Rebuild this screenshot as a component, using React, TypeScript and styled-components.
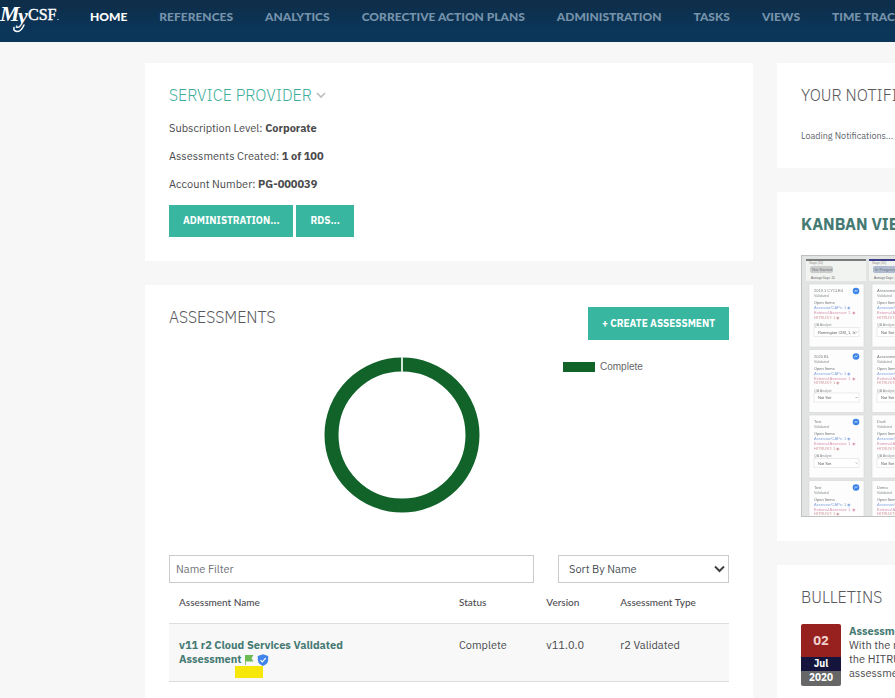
import React from "react";
import styled, { createGlobalStyle } from "styled-components";

const sans = `"IBM Plex Sans", "Noto Sans", sans-serif`;
const lato = `Lato, "Open Sans", sans-serif`;
const teal = "#38b6a0";
const link = "#457a73";

const GlobalStyle = createGlobalStyle`
  *, *::before, *::after { box-sizing: border-box; }
  body {
    margin: 0;
    background: #f7f7f7;
    color: #4a4a4c;
    font: 11px/14px ${sans};
  }
  h2, p { margin: 0; }
`;

const Page = styled.div`
  min-height: 100vh;
  overflow-x: clip;
`;

const TopBar = styled.header`
  display: flex;
  align-items: flex-start;
  height: 42px;
  background: linear-gradient(#0e2d48, #0b3559 70%);
  white-space: nowrap;
  overflow: hidden;
`;

const Logo = styled.a`
  flex: none;
  width: 90px;
  height: 42px;
`;

const Nav = styled.nav`
  display: flex;
  gap: 32px;
`;

const NavLink = styled.a<{ $active?: boolean }>`
  flex: none;
  color: ${(p) => (p.$active ? "#ffffff" : "#7593ab")};
  font: 900 12px/34px ${lato};
  text-decoration: none;
`;

const Layout = styled.main`
  display: grid;
  grid-template-columns: minmax(0, 1fr) 292px;
  gap: 24px;
  width: calc(100% + 174px);
  padding: 21px 0 0 145px;
`;

const Column = styled.div`
  display: flex;
  flex-direction: column;
  gap: 24px;
`;

const Card = styled.section`
  padding: 20px 24px 24px;
  background: #ffffff;
`;

const CardHeader = styled.div`
  display: flex;
  justify-content: space-between;
  align-items: flex-start;
`;

const Title = styled.h2<{ $tone?: "teal" | "strong" }>`
  color: ${(p) => (p.$tone === "teal" ? "#3fae9c" : p.$tone === "strong" ? link : "#58585c")};
  font-size: 16px;
  font-weight: ${(p) => (p.$tone === "strong" ? 700 : 300)};
  line-height: 24px;
  white-space: nowrap;
`;

const Details = styled.div`
  margin: 7px 0;
  line-height: 28px;
`;

const Buttons = styled.div`
  display: flex;
  gap: 3px;
`;

const Button = styled.button`
  height: 32px;
  padding: 0 14px;
  border: 0;
  background: ${teal};
  color: #ffffff;
  font: 700 10px/14px ${sans};
  white-space: nowrap;
`;

const CreateButton = styled(Button)`
  height: 33px;
  margin-top: 2px;
`;

const ChartRow = styled.div`
  display: grid;
  grid-template-columns: minmax(0, 1fr) 166px;
  margin: 17px 0 42px;
`;

const ChartCell = styled.div`
  display: flex;
  justify-content: center;
  padding-left: 72px;
`;

const Legend = styled.div`
  display: flex;
  align-items: center;
  gap: 5px;
  height: 20px;
  color: #666666;
  font: 10px/20px "Liberation Sans", sans-serif;
`;

const Swatch = styled.span`
  width: 32px;
  height: 10px;
  background: #11632a;
`;

const Filters = styled.div`
  display: grid;
  grid-template-columns: minmax(0, 1fr) 171px;
  gap: 24px;
`;

const NameInput = styled.input`
  width: 100%;
  height: 28px;
  padding: 0 6px;
  border: 1px solid #c8cccc;
  border-radius: 0;
  background: #ffffff;
  font: 11px/14px ${sans};
  &::placeholder { color: #707378; opacity: 1; }
`;

const SelectWrap = styled.div`
  display: grid;
  align-items: center;
  & > * { grid-area: 1 / 1; }
  & > svg { justify-self: end; margin-right: 4px; pointer-events: none; }
`;

const SortSelect = styled.select`
  appearance: none;
  width: 100%;
  height: 28px;
  padding: 0 10px;
  border: 1px solid #c8cccc;
  border-radius: 0;
  background: #ffffff;
  color: #4a4f55;
  font: 11px/14px ${sans};
`;

const Table = styled.table`
  width: 100%;
  border-collapse: collapse;
  table-layout: fixed;
`;

const Th = styled.th<{ $width: string }>`
  width: ${(p) => p.$width};
  height: 40px;
  padding: 0 10px 2px;
  border-bottom: 1px solid #dddfdf;
  color: #4c4c50;
  font: 500 10px/14px ${lato};
  text-align: left;
  white-space: nowrap;
`;

const Td = styled.td`
  height: 58px;
  padding: 14px 10px;
  border-bottom: 1px solid #dddfdf;
  background: #f8f8f8;
  vertical-align: top;
`;

const NameCell = styled.div`
  position: relative;
  max-width: 190px;
`;

const NameLink = styled.a`
  color: ${link};
  font-weight: 700;
  text-decoration: none;
`;

const Highlight = styled.span`
  position: absolute;
  left: 56px;
  top: 28px;
  width: 28px;
  height: 12px;
  background: #f7e60a;
`;

const InlineIcon = styled.svg`
  margin-left: 2px;
  vertical-align: top;
`;

const Loading = styled.p`
  margin: 22px 0 1px;
  color: #62666d;
  font: 9px/14px ${sans};
`;

const Thumb = styled.a`
  display: block;
  margin-top: 19px;
  height: 262px;
  border: 1px solid #bfc2c1;
  background: #e2e4e3;
  overflow: hidden;
`;

const Bulletin = styled.article`
  display: grid;
  grid-template-columns: 40px minmax(0, 1fr);
  gap: 8px;
  margin-top: 15px;
`;

const DateBadge = styled.time`
  display: grid;
  grid-template-rows: 33px 14px 15px;
  align-self: start;
  border-radius: 2px;
  overflow: hidden;
  color: #ffffff;
  font-size: 10px;
  font-weight: 700;
  text-align: center;
`;

const Day = styled.span`
  background: #96211e;
  color: #f0cfcd;
  font-size: 13px;
  line-height: 33px;
`;

const Month = styled.span`
  background: #14143c;
`;

const Year = styled.span`
  background: #666766;
`;

const BulletinText = styled.div`
  white-space: nowrap;
`;

const navItems = [
  "HOME",
  "REFERENCES",
  "ANALYTICS",
  "CORRECTIVE ACTION PLANS",
  "ADMINISTRATION",
  "TASKS",
  "VIEWS",
  "TIME TRACKING",
];

const boardColumns = [
  { x: 4, color: "#777a79", status: "Not Started", pill: "#c9cccb", titles: ["2019.1 CYCLE4", "2020 BL", "Test", "Test"], analyst: "Remington CIM_1, Ix" },
  { x: 67, color: "#3c3c86", status: "In Progress", pill: "#aebbd0", titles: ["Assessment A", "Assessment B", "Draft", "Demo"], analyst: "Not Set" },
];

function Board() {
  return (
    <svg width="242" height="260" viewBox="0 0 242 260" fontFamily="Liberation Sans, sans-serif" fontSize="4" aria-label="Kanban board preview">
      <g style={{ filter: "blur(0.4px)" }}>
        {boardColumns.map((c) => (
          <g key={c.x}>
            <rect x={c.x} y="3" width="60" height="22" fill="#f1f3f1" />
            <rect x={c.x} y="3" width="60" height="2" fill={c.color} />
            <text x={c.x + 3} y="8" fontSize="3" fill="#888">Stage (10)</text>
            <rect x={c.x + 4} y="10" width="23" height="7" rx="2" fill={c.pill} />
            <text x={c.x + 6} y="15" fill="#75787d">{c.status}</text>
            <text x={c.x + 5} y="23" fontSize="3" fill="#666">Average Days: 20</text>
            {c.titles.map((title, i) => (
              <g key={title + i} transform={`translate(${c.x + 3} ${28 + i * 65.5})`}>
                <rect width="55" height="63" rx="1" fill="#fcfdfc" stroke="#d3d6d4" strokeWidth="0.6" />
                <text x="5" y="8" fill="#7a7d80">{title}</text>
                <text x="5" y="13" fontSize="3.6" fill="#8f9296">Validated</text>
                <circle cx="47" cy="7" r="3.3" fill="#3d84e6" />
                <path d="M45.5 8.2l1-2 1 1.2 1-1.6" stroke="#d8e8ff" strokeWidth="0.7" fill="none" />
                <text x="5" y="20" fill="#707376">Open Items</text>
                <text x="5" y="25" fill="#86a5e0">Assessor/CAPs: 1 ◉</text>
                <text x="5" y="30" fill="#d892b0">External Assessor: 1 ◉</text>
                <text x="5" y="34.5" fill="#d4989e">HITRUST: 1 ◉</text>
                <text x="5" y="42" fontSize="3.6" fill="#8f9296">QA Analyst</text>
                <rect x="5" y="43.5" width="45" height="9" fill="#ffffff" stroke="#dcdfdf" strokeWidth="0.6" />
                <text x="9" y="49.5" fill="#606366">{i === 0 ? c.analyst : "Not Set"}</text>
                <path d="M46.5 47.5l1 1 1-1" stroke="#888" strokeWidth="0.6" fill="none" />
              </g>
            ))}
          </g>
        ))}
      </g>
    </svg>
  );
}

export default function App() {
  return (
    <Page>
      <GlobalStyle />
      <TopBar>
        <Logo href="#" aria-label="MyCSF home">
          <svg width="62" height="42" viewBox="0 0 62 42" fill="#ffffff">
            <text x="0" y="21" fontFamily="Liberation Serif, serif" fontSize="22" fontStyle="italic" fontWeight="700">M</text>
            <text x="18" y="23" fontFamily="Liberation Serif, serif" fontSize="22" fontStyle="italic" fontWeight="700">y</text>
            <path d="M24 25q-3 7-7 6.500q-4-.5-3-4" fill="none" stroke="#fff" strokeWidth="1.500" strokeLinecap="round" />
            <text x="28" y="20" fontFamily="Liberation Serif, serif" fontSize="16" fontWeight="400" stroke="#ffffff" strokeWidth="0.4">CSF</text>
            <rect x="57" y="19" width="2" height="1" fill="#6fa3c8" />
          </svg>
        </Logo>
        <Nav>
          {navItems.map((item, i) => (
            <NavLink key={item} href="#" $active={i === 0}>{item}</NavLink>
          ))}
        </Nav>
      </TopBar>

      <Layout>
        <Column>
          <Card>
            <Title $tone="teal">
              SERVICE PROVIDER{" "}
              <svg width="10" height="10" viewBox="0 0 10 10" fill="none" stroke="#b9bdbd" strokeWidth="1.600" aria-hidden="true">
                <path d="M1 2l4 4 4-4" />
              </svg>
            </Title>
            <Details>
              <p>Subscription Level: <b>Corporate</b></p>
              <p>Assessments Created: <b>1 of 100</b></p>
              <p>Account Number: <b>PG-000039</b></p>
            </Details>
            <Buttons>
              <Button type="button">ADMINISTRATION...</Button>
              <Button type="button">RDS...</Button>
            </Buttons>
          </Card>

          <Card>
            <CardHeader>
              <Title>ASSESSMENTS</Title>
              <CreateButton type="button">+ CREATE ASSESSMENT</CreateButton>
            </CardHeader>
            <ChartRow>
              <ChartCell>
                <svg width="156" height="156" viewBox="0 0 156 156" role="img" aria-label="Complete: 100%">
                  <circle cx="78" cy="78" r="70.500" fill="none" stroke="#11632a" strokeWidth="14" />
                  <path d="M78 0v15" stroke="#d5e6da" strokeWidth="2" />
                </svg>
              </ChartCell>
              <Legend><Swatch />Complete</Legend>
            </ChartRow>
            <Filters>
              <NameInput type="text" placeholder="Name Filter" aria-label="Name Filter" />
              <SelectWrap>
                <SortSelect aria-label="Sort order" defaultValue="name">
                  <option value="name">Sort By Name</option>
                </SortSelect>
                <svg width="11" height="8" viewBox="0 0 11 8" fill="none" stroke="#3f4245" strokeWidth="2" aria-hidden="true">
                  <path d="M1 1.500l4.500 4.500L10 1.500" />
                </svg>
              </SelectWrap>
            </Filters>
            <Table>
              <thead>
                <tr>
                  <Th $width="50%">Assessment Name</Th>
                  <Th $width="15.6%">Status</Th>
                  <Th $width="13.2%">Version</Th>
                  <Th $width="21.2%">Assessment Type</Th>
                </tr>
              </thead>
              <tbody>
                <tr>
                  <Td>
                    <NameCell>
                      <NameLink href="#">v11 r2 Cloud Services Validated Assessment</NameLink>
                      <InlineIcon width="11" height="14" viewBox="0 0 11 14" aria-label="Flag">
                        <path d="M1 3h8.500L7.500 6.200 9.500 9.500H1.800V13H1z" fill="#6dbb55" />
                      </InlineIcon>
                      <InlineIcon width="12" height="14" viewBox="0 0 12 14" aria-label="Verified">
                        <path d="M6 2.200L11.200 4v4q0 3.800-5.200 6Q.8 11.800.8 8V4z" fill="#4285ea" />
                        <path d="M3.500 8.200l1.800 1.800 3.400-3.800" fill="none" stroke="#fff" strokeWidth="1.200" />
                      </InlineIcon>
                      <Highlight />
                    </NameCell>
                  </Td>
                  <Td>Complete</Td>
                  <Td>v11.0.0</Td>
                  <Td>r2 Validated</Td>
                </tr>
              </tbody>
            </Table>
          </Card>
        </Column>

        <Column>
          <Card>
            <Title>YOUR NOTIFICATIONS</Title>
            <Loading>Loading Notifications...</Loading>
          </Card>
          <Card>
            <Title $tone="strong">KANBAN VIEW</Title>
            <Thumb href="#"><Board /></Thumb>
          </Card>
          <Card>
            <Title>BULLETINS</Title>
            <Bulletin>
              <DateBadge dateTime="2020-07-02">
                <Day>02</Day>
                <Month>Jul</Month>
                <Year>2020</Year>
              </DateBadge>
              <BulletinText>
                <NameLink href="#">Assessment Update</NameLink>
                <br />
                With the release of
                <br />
                the HITRUST CSF
                <br />
                assessments
              </BulletinText>
            </Bulletin>
          </Card>
        </Column>
      </Layout>
    </Page>
  );
}
